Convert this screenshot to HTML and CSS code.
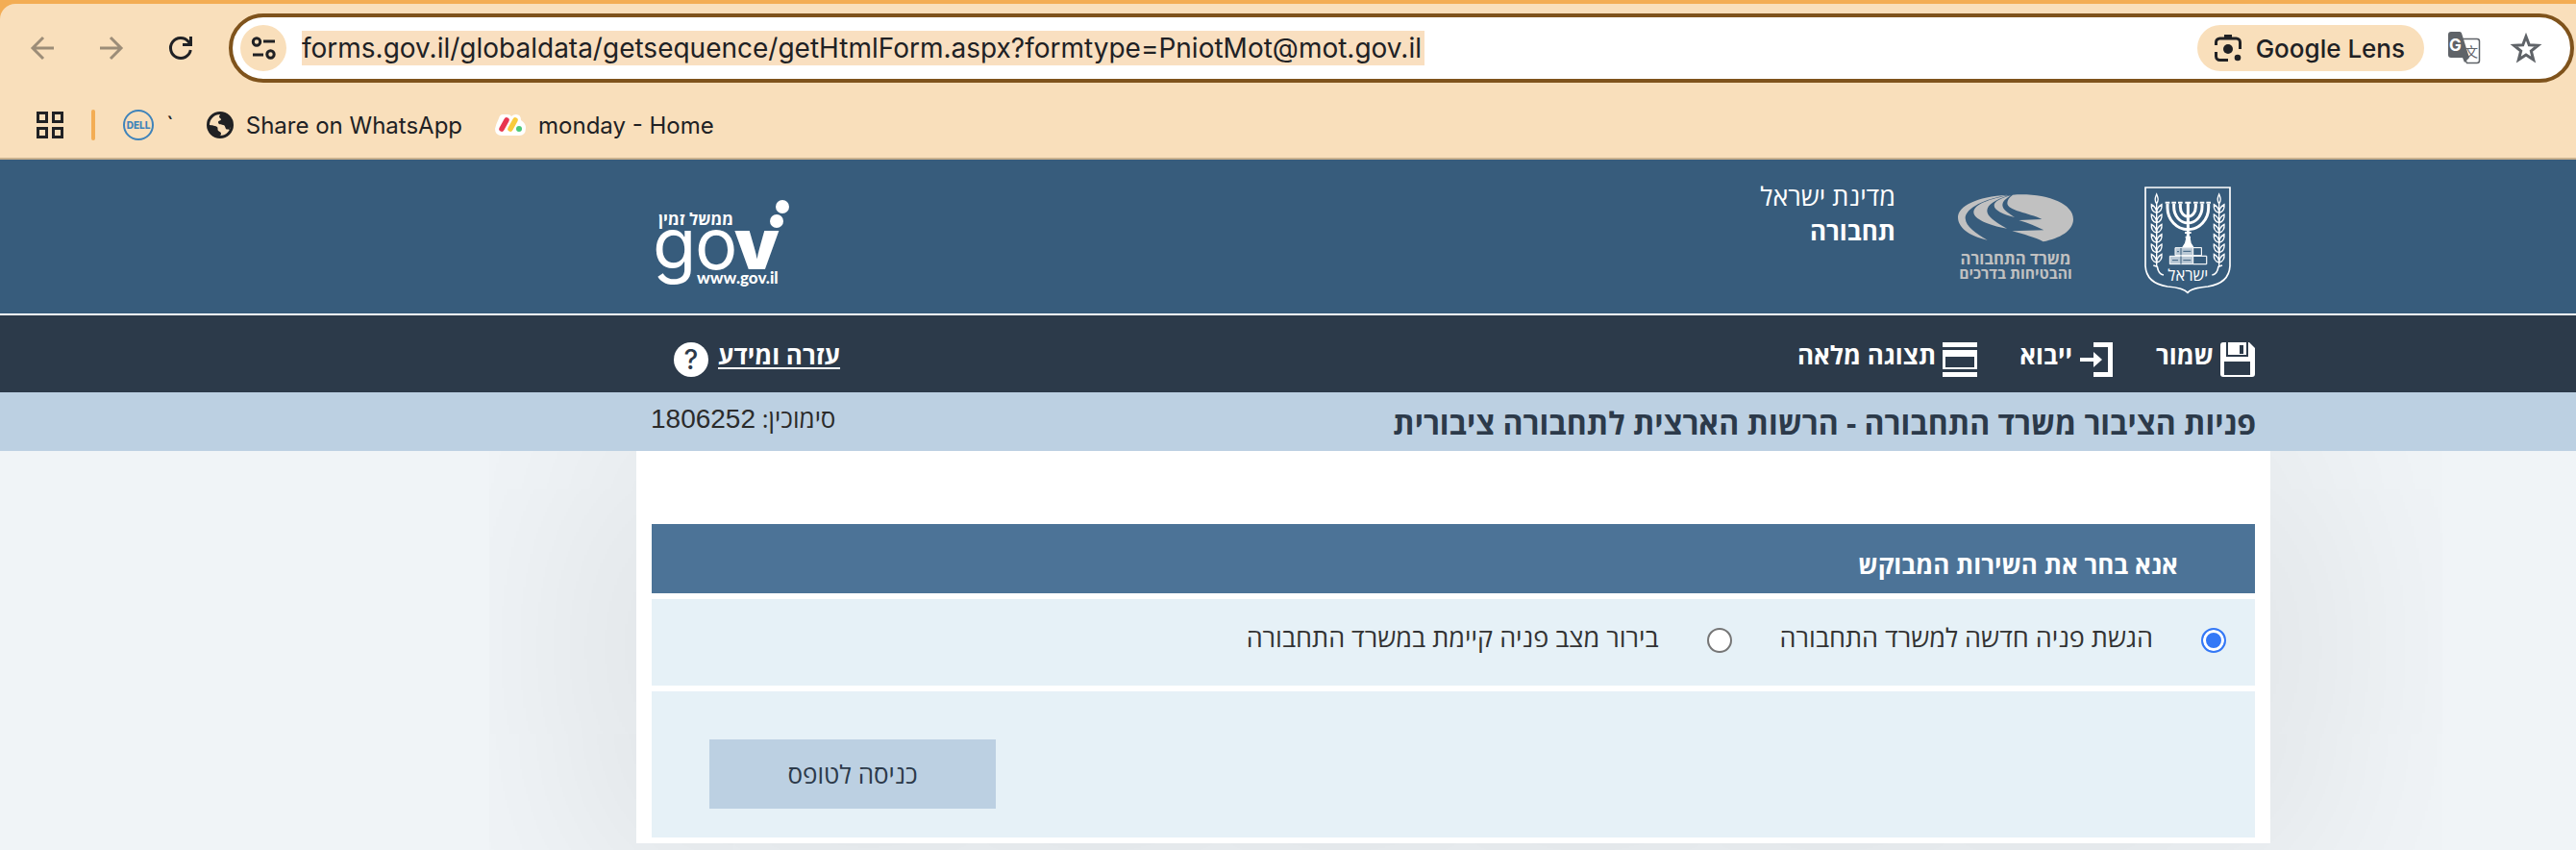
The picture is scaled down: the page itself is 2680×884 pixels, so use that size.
FILE: index.html
```html
<!DOCTYPE html>
<html lang="he">
<head>
    <meta charset="UTF-8">
    <meta name="viewport" content="width=device-width, initial-scale=1.0">
    <title>פניות הציבור משרד התחבורה</title>
    <link rel="stylesheet" href="styles.css">
</head>
<body>

    <!-- Browser bar -->
    <div class="browser" dir="ltr">
        <div class="browser-inner">
            <div class="toolbar">
                <div class="nav-buttons">
                    <button class="icon-btn faded" aria-label="Back">
                        <svg width="24" height="24" viewBox="0 0 24 24" fill="none" stroke="currentColor" stroke-width="3"><path d="M24 12H2M13 1L2 12l11 11"/></svg>
                    </button>
                    <button class="icon-btn faded" aria-label="Forward">
                        <svg width="24" height="24" viewBox="0 0 24 24" fill="none" stroke="currentColor" stroke-width="3"><path d="M0 12h22M11 1l11 11-11 11"/></svg>
                    </button>
                    <button class="icon-btn" aria-label="Reload">
                        <svg width="24" height="24" viewBox="0 0 24 24" fill="none" stroke="currentColor" stroke-width="3"><path d="M22.300 14A10.500 10.500 0 1 1 20 5.200L22 8M22.500 0v8.500H14"/></svg>
                    </button>
                </div>
                <div class="omnibox">
                    <button class="site-info" aria-label="Site information">
                        <svg width="26" height="24" viewBox="0 0 26 24" fill="none" stroke="currentColor" stroke-width="3"><circle cx="6" cy="5.500" r="3.700"/><path d="M13 5h12M2 19h11"/><circle cx="20.500" cy="18.500" r="3.700"/></svg>
                    </button>
                    <input class="url" type="text" aria-label="Address" value="forms.gov.il/globaldata/getsequence/getHtmlForm.aspx?formtype=PniotMot@mot.gov.il">
                    <div class="omnibox-actions">
                        <button class="lens">
                            <svg width="28" height="28" viewBox="0 0 28 28" fill="none" stroke="currentColor" stroke-width="3"><path d="M1.500 11V8a4 4 0 0 1 4-4h17a4 4 0 0 1 4 4v7M1.500 18v4.500a4 4 0 0 0 4 4H14"/><path d="M10 1.500h8"/><circle cx="14" cy="15" r="5" fill="currentColor" stroke="none"/><circle cx="24" cy="24" r="3.300" fill="currentColor" stroke="none"/></svg>
                            Google Lens
                        </button>
                        <button class="icon-btn action" aria-label="Translate">
                            <svg width="34" height="34" viewBox="0 0 34 34"><path d="M14 7.500h16a2.500 2.500 0 0 1 2.500 2.500v20a2.500 2.500 0 0 1-2.500 2.500H19.500l-3-6" fill="#fff" stroke="currentColor" stroke-width="1.500"/><path d="M3 0h9a2 2 0 0 1 2 1.500L22 27l-5 5-2-5H3a3 3 0 0 1-3-3V3a3 3 0 0 1 3-3z" fill="currentColor"/><text class="tr-g" x="1" y="20">G</text><text class="tr-cjk" x="17" y="26">文</text></svg>
                        </button>
                        <button class="icon-btn action" aria-label="Bookmark this page">
                            <svg width="32" height="32" viewBox="0 0 32 32" fill="none" stroke="currentColor" stroke-width="3"><path d="M16 4l3.300 8.700 9.200.5-7.200 5.800 2.400 9L16 23l-7.700 5 2.400-9-7.200-5.800 9.200-.5z"/></svg>
                        </button>
                    </div>
                </div>
            </div>
            <div class="bookmarks">
                <button class="icon-btn" aria-label="Apps">
                    <svg width="28" height="28" viewBox="0 0 28 28" fill="none" stroke="currentColor" stroke-width="3"><path d="M1.500 1.500h9v9h-9zM17.500 1.500h9v9h-9zM1.500 17.500h9v9h-9zM17.500 17.500h9v9h-9z"/></svg>
                </button>
                <span class="divider"></span>
                <div class="bookmark-list">
                    <a class="bookmark" href="#">
                        <svg width="32" height="32" viewBox="0 0 32 32"><circle cx="16" cy="16" r="15" fill="none" stroke="#3f83ba" stroke-width="2"/><text class="dell" x="16" y="20">DELL</text></svg>
                        `
                    </a>
                    <a class="bookmark" href="#">
                        <svg width="28" height="28" viewBox="0 0 28 28"><circle cx="14" cy="14" r="12.500" fill="#f9dfbb" stroke="#202124" stroke-width="3"/><path d="M2 14c3 0 8 1 9 2s0 3 1 4 3 1 3 3-1 2-3 2v2C6 27 2 21 2 14zM13 2c5-1 12 3 13 11l-2 6c-2-1-3 0-4-1-1-2-1-4-3-4-2-1-5 0-5-3 0-2 3-1 3-3 0-1-2-1-2-3 0-1 1-1 1-2z" fill="#202124"/></svg>
                        Share on WhatsApp
                    </a>
                    <a class="bookmark" href="#">
                        <svg width="32" height="22" viewBox="0 0 32 22"><path d="M8 0h5q3 0 4 2 2-2 5-2 5 0 5 6 5 3 5 8 0 8-7 8H7q-7 0-7-7Q1 10 4 4q1-4 4-4z" fill="#fff"/><path d="M7 15l5-9" stroke="#e8364f" stroke-width="5.500" stroke-linecap="round"/><path d="M16 15l5-9" stroke="#f9cb3c" stroke-width="5.500" stroke-linecap="round"/><circle cx="25" cy="15" r="3" fill="#4cc878"/></svg>
                        monday - Home
                    </a>
                </div>
            </div>
        </div>
    </div>

    <div class="page" dir="rtl">

        <!-- Government header -->
        <header class="header columns">
            <div class="header-content">
                <svg class="emblem" width="90" height="112" viewBox="92 72 270 336" fill="none" stroke="#fff" role="img" aria-label="סמל המדינה">
                    <defs>
                        <g id="leaves">
                            <path d="M0 0C-16 -4-17-16-16-26-6-20 0-12 0 0zM0 0C16-4 17-16 16-26 6-20 0-12 0 0z"/>
                        </g>
                        <g id="branch" stroke-width="4">
                            <path d="M0 222V26M0 26C-7 14-5 8 0 -4 5 8 7 14 0 26z"/>
                            <use href="#leaves" y="54"/><use href="#leaves" y="85"/><use href="#leaves" y="116"/><use href="#leaves" y="147"/><use href="#leaves" y="178"/><use href="#leaves" y="209"/>
                        </g>
                    </defs>
                    <path stroke-width="5" d="M95 75H359V320Q356 374 290 384 240 388 227 403 214 388 164 384 98 374 95 320Z"/>
                    <use href="#branch" x="130" y="100"/>
                    <use href="#branch" x="325" y="100"/>
                    <path stroke-width="5" d="M120 318l12 4q4 24 20 26M335 318l-12 4q-4 24-20 26"/>
                    <path stroke-width="9" d="M164 126v12a64 68 0 0 0 128 0v-12M184 126v10a44 50 0 0 0 88 0v-10M204 126v10a24 30 0 0 0 48 0v-10M228 124v116"/>
                    <path stroke-width="6" d="M157 122h14M177 122h14M197 122h14M219 122h18M245 122h14M265 122h14M285 122h14M218 216h20M220 230h16"/>
                    <path fill="#fff" stroke="none" d="M222 232h13l3 16 8 13h-36l8-13z"/>
                    <path fill="#b9c8d5" stroke-width="3" d="M188 263h82v24h-82zM171 289h115v25H171z"/>
                    <path fill="#375c7c" stroke-width="3" d="M244 263h26v24h-26zM244 289h42v25h-42z"/>
                    <path stroke="#375c7c" stroke-width="3" d="M206 264v22M206 289v25M194 275h6M213 274h24M179 302h18M213 302h24"/>
                    <text class="emblem-text" x="228" y="365">ישראל</text>
                </svg>
                <svg class="ministry" width="120" height="92" viewBox="51 65 360 276" fill="#c1c1c1">
                    <path d="M205 67C110 72 51 102 51 137c0 30 32 58 92 71-38-22-67-42-69-68 0-26 40-55 131-73z"/>
                    <path d="M212 68c-58 10-112 28-112 53 0 20 44 40 104 51-40-22-62-38-62-55 0-20 26-35 70-49z"/>
                    <path d="M216 69c-32 8-52 19-52 31 0 14 26 27 64 37-22-14-38-25-38-38 0-11 10-20 26-30z"/>
                    <path d="M222 67c100-7 189 25 189 76 0 36-42 60-94 70-26-14-58-22-97-33l99-3c-24-12-48-22-78-31l72-3c-40-20-108-26-108-50 0-10 6-18 17-26z"/>
                    <text class="ministry-text" x="231" y="283">משרד התחבורה</text>
                    <text class="ministry-text ministry-line2" x="231" y="330">והבטיחות בדרכים</text>
                </svg>
                <div class="titles">
                    <div>מדינת ישראל</div>
                    <div class="office">תחבורה</div>
                </div>
                <svg class="gov-logo" width="140" height="92" viewBox="0 0 140 92" fill="#fff" direction="ltr">
                    <circle cx="132" cy="7" r="7"/>
                    <circle cx="126" cy="22" r="7"/>
                    <text class="gov-top" x="42" y="26">ממשל זמין</text>
                    <text class="gov-thin" x="-3" y="72">g</text>
                    <text class="gov-thin" x="41" y="72">o</text>
                    <text class="gov-bold" x="82" y="72">v</text>
                    <text class="gov-url" x="43" y="87">www.gov.il</text>
                </svg>
            </div>
        </header>

        <!-- Menu -->
        <nav class="menu columns">
            <div class="menu-content">
                <a class="menu-item" href="#">
                    <svg width="36" height="36" viewBox="0 0 36 36" fill="#fff"><path d="M3 0h27l6 6v27a3 3 0 0 1-3 3H3a3 3 0 0 1-3-3V3a3 3 0 0 1 3-3z"/><path fill="#2c3a4a" d="M6 0h2v13h19V0h2v15H6zM20 3h4v9h-4zM4 20h27v14H4z"/></svg>
                    <span>שמור</span>
                </a>
                <a class="menu-item" href="#">
                    <svg width="36" height="36" viewBox="0 0 36 36" fill="#fff"><path d="M15 0h20v36H15v-5h15V5H15zM1 16h14v-6l9 8-9 8v-6H1z"/></svg>
                    <span>ייבוא</span>
                </a>
                <a class="menu-item" href="#">
                    <svg width="36" height="36" viewBox="0 0 36 36" fill="#fff"><path d="M0 0h36v5H0zM0 31h36v5H0z"/><path fill-rule="evenodd" d="M0 8h36v20H0zM3 15v11h30V15z"/></svg>
                    <span>תצוגה מלאה</span>
                </a>
                <a class="menu-item help" href="#">
                    <span>עזרה ומידע</span>
                    <svg width="36" height="36" viewBox="0 0 36 36"><circle cx="18" cy="18" r="18" fill="#fff"/><text class="question" x="18" y="28">?</text></svg>
                </a>
            </div>
        </nav>

        <!-- Form title -->
        <div class="title-bar columns">
            <div class="title-content">
                <h1>פניות הציבור משרד התחבורה - הרשות הארצית לתחבורה ציבורית</h1>
                <div class="reference">סימוכין: <span class="number">1806252</span></div>
            </div>
        </div>

        <main class="columns">
            <form class="card">
                <h2>אנא בחר את השירות המבוקש</h2>
                <div class="options">
                    <input type="radio" name="service" id="new-request" checked>
                    <label for="new-request">הגשת פניה חדשה למשרד התחבורה</label>
                    <input type="radio" name="service" id="status">
                    <label for="status">בירור מצב פניה קיימת במשרד התחבורה</label>
                </div>
                <div class="submit-row">
                    <button class="submit" type="submit">כניסה לטופס</button>
                </div>
            </form>
        </main>
    </div>

</body>
</html>
```
FILE: styles.css
```css
* {
    box-sizing: border-box;
}

body {
    margin: 0;
    min-height: 100vh;
    background-color: #f0f4f7;
    font-family: "Open Sans", "Liberation Sans", sans-serif;
    font-size: 26px;
    overflow: hidden;
}

svg {
    display: block;
    flex-shrink: 0;
    overflow: visible;
}

button {
    font: inherit;
    border: none;
    padding: 0;
    cursor: pointer;
}

a {
    color: inherit;
    text-decoration: none;
}

/* Browser bar */
.browser {
    background-color: #f3ad54;
    padding-top: 4px;
    font-family: "Inter", "Liberation Sans", sans-serif;
    color: #202124;
}

.browser-inner {
    background-color: #f9dfbb;
    border-top-left-radius: 16px;
    border-bottom: 2px solid #c9b18f;
    padding: 10px 2px 0 0;
}

.toolbar {
    display: flex;
    align-items: center;
    gap: 38px;
    padding-left: 32px;
}

.nav-buttons {
    display: flex;
    gap: 48px;
}

.icon-btn {
    background: none;
    color: #202124;
}

.faded {
    color: #9c8d78;
}

.omnibox {
    flex: 1;
    display: flex;
    align-items: center;
    gap: 16px;
    height: 72px;
    padding: 0 24px 0 8px;
    border: 4px solid #7f531c;
    border-radius: 36px;
    background-color: #fff;
}

.site-info {
    display: flex;
    align-items: center;
    justify-content: center;
    width: 48px;
    height: 48px;
    border-radius: 50%;
    background-color: #f9dfbb;
    color: #202124;
}

/* Address shown as selected */
.url {
    width: 1168px;
    height: 36px;
    padding: 0;
    border: none;
    outline: none;
    background-color: #f9dfc0;
    color: #202124;
    font-family: inherit;
    font-size: 28px;
}

.omnibox-actions {
    display: flex;
    align-items: center;
    gap: 20px;
    margin-left: auto;
}

.action {
    display: flex;
    align-items: center;
    justify-content: center;
    width: 44px;
    height: 44px;
    color: #5f6368;
}

.lens {
    display: flex;
    align-items: center;
    gap: 15px;
    height: 48px;
    padding: 0 20px 0 18px;
    border-radius: 24px;
    background-color: #f9dfbb;
    color: #202124;
    font-size: 26px;
    font-weight: 500;
}

.tr-g {
    font-size: 17px;
    font-weight: 700;
    fill: #fff;
}

.tr-cjk {
    font-family: "Noto Sans CJK SC", sans-serif;
    font-size: 14px;
    fill: #5f6368;
}

.bookmarks {
    display: flex;
    align-items: center;
    gap: 29px;
    height: 78px;
    padding: 10px 0 0 38px;
    font-size: 24px;
}

.bookmark-list {
    display: flex;
    gap: 34px;
}

.divider {
    width: 4px;
    height: 32px;
    border-radius: 2px;
    background-color: #f3ad54;
}

.bookmark {
    display: flex;
    align-items: center;
    gap: 13px;
}

.dell {
    font-size: 10px;
    font-weight: 800;
    fill: #3f83ba;
    text-anchor: middle;
}

/* Page columns shared by every full width bar */
.columns {
    display: grid;
    grid-template-columns: minmax(0, 318fr) minmax(0, 1700px) minmax(0, 662fr);
}

.columns > * {
    grid-column: 2;
}

/* Header */
.header {
    position: relative;
    background-color: #375c7c;
    border-bottom: 2px solid #fff;
    color: #fff;
}

.header-content {
    display: flex;
    align-items: flex-start;
    padding: 20px 41px 0 20px;
    height: 160px;
}

.emblem {
    margin-top: 8px;
}

.ministry {
    margin: 16px 74px 0 65px;
}

.titles {
    font-size: 27px;
    line-height: 36px;
}

.office {
    font-size: 26px;
    font-weight: 700;
}

.gov-logo {
    margin: 22px auto 0 0;
}

.emblem-text {
    font-size: 50px;
    fill: #fff;
    stroke: none;
    text-anchor: middle;
}

.ministry-text {
    font-size: 50px;
    font-weight: 700;
    text-anchor: middle;
}

.ministry-line2 {
    font-size: 47px;
}

.gov-top {
    font-size: 17px;
    font-weight: 700;
    text-anchor: middle;
}

.gov-thin,
.gov-bold {
    font-family: "Inter", sans-serif;
    font-size: 74px;
}

.gov-bold {
    font-weight: 900;
}

.gov-url {
    font-family: "Lato", sans-serif;
    font-size: 17px;
    font-weight: 900;
}

/* Menu */
.menu {
    position: relative;
    background-color: #2c3a4a;
    color: #fff;
}

.menu-content {
    display: flex;
    gap: 44px;
    height: 80px;
    padding: 28px 16px 0 39px;
    font-weight: 700;
    line-height: 26px;
}

.menu-item {
    display: flex;
    align-items: flex-start;
    gap: 7px;
}

.help {
    gap: 10px;
    margin-right: auto;
}

.help span {
    text-decoration: underline;
    text-decoration-thickness: 2px;
    text-underline-offset: 3px;
}

.question {
    font-family: "Inter", sans-serif;
    font-size: 28px;
    font-weight: 500;
    fill: #2c3a4a;
    text-anchor: middle;
}

/* Title bar */
.title-bar {
    position: relative;
    background-color: #bcd0e2;
}

.title-content {
    display: flex;
    justify-content: space-between;
    height: 61px;
    padding: 0 15px;
}

h1 {
    margin: 0;
    font-size: 32px;
    line-height: 63px;
    color: #2c3a4a;
}

.reference {
    line-height: 54px;
    color: #2b2b2b;
}

.number {
    font-family: "Liberation Sans", sans-serif;
    font-size: 28px;
}

/* Form card */
.card {
    display: flex;
    flex-direction: column;
    gap: 6px;
    padding: 76px 16px 6px;
    background-color: #fff;
    box-shadow: 0 0 280px rgba(0, 0, 0, 0.14);
}

/* The bars above cover the card's shadow */
.header,
.menu,
.title-bar {
    z-index: 1;
}

h2 {
    margin: 0;
    padding: 24px 80px 12px;
    background-color: #4c7397;
    color: #fff;
    font-size: 26px;
    line-height: 36px;
}

.options {
    display: flex;
    align-items: flex-start;
    gap: 50px;
    padding: 22px 30px 32px;
    background-color: #e6f1f7;
    color: #333;
    font-size: 27px;
    line-height: 36px;
}

.options input {
    appearance: none;
    width: 26px;
    height: 26px;
    margin: 8px 0 0;
    flex-shrink: 0;
    border: 2px solid #767676;
    border-radius: 50%;
    background-color: #fff;
}

.options input:checked {
    border-color: #3478f6;
    background-color: #3478f6;
    box-shadow: inset 0 0 0 3px #fff;
}

.submit-row {
    display: flex;
    justify-content: flex-end;
    padding: 50px 60px 30px;
    background-color: #e6f1f7;
}

.submit {
    width: 298px;
    height: 72px;
    background-color: #bcd0e2;
    color: #2c3a4a;
}
```
